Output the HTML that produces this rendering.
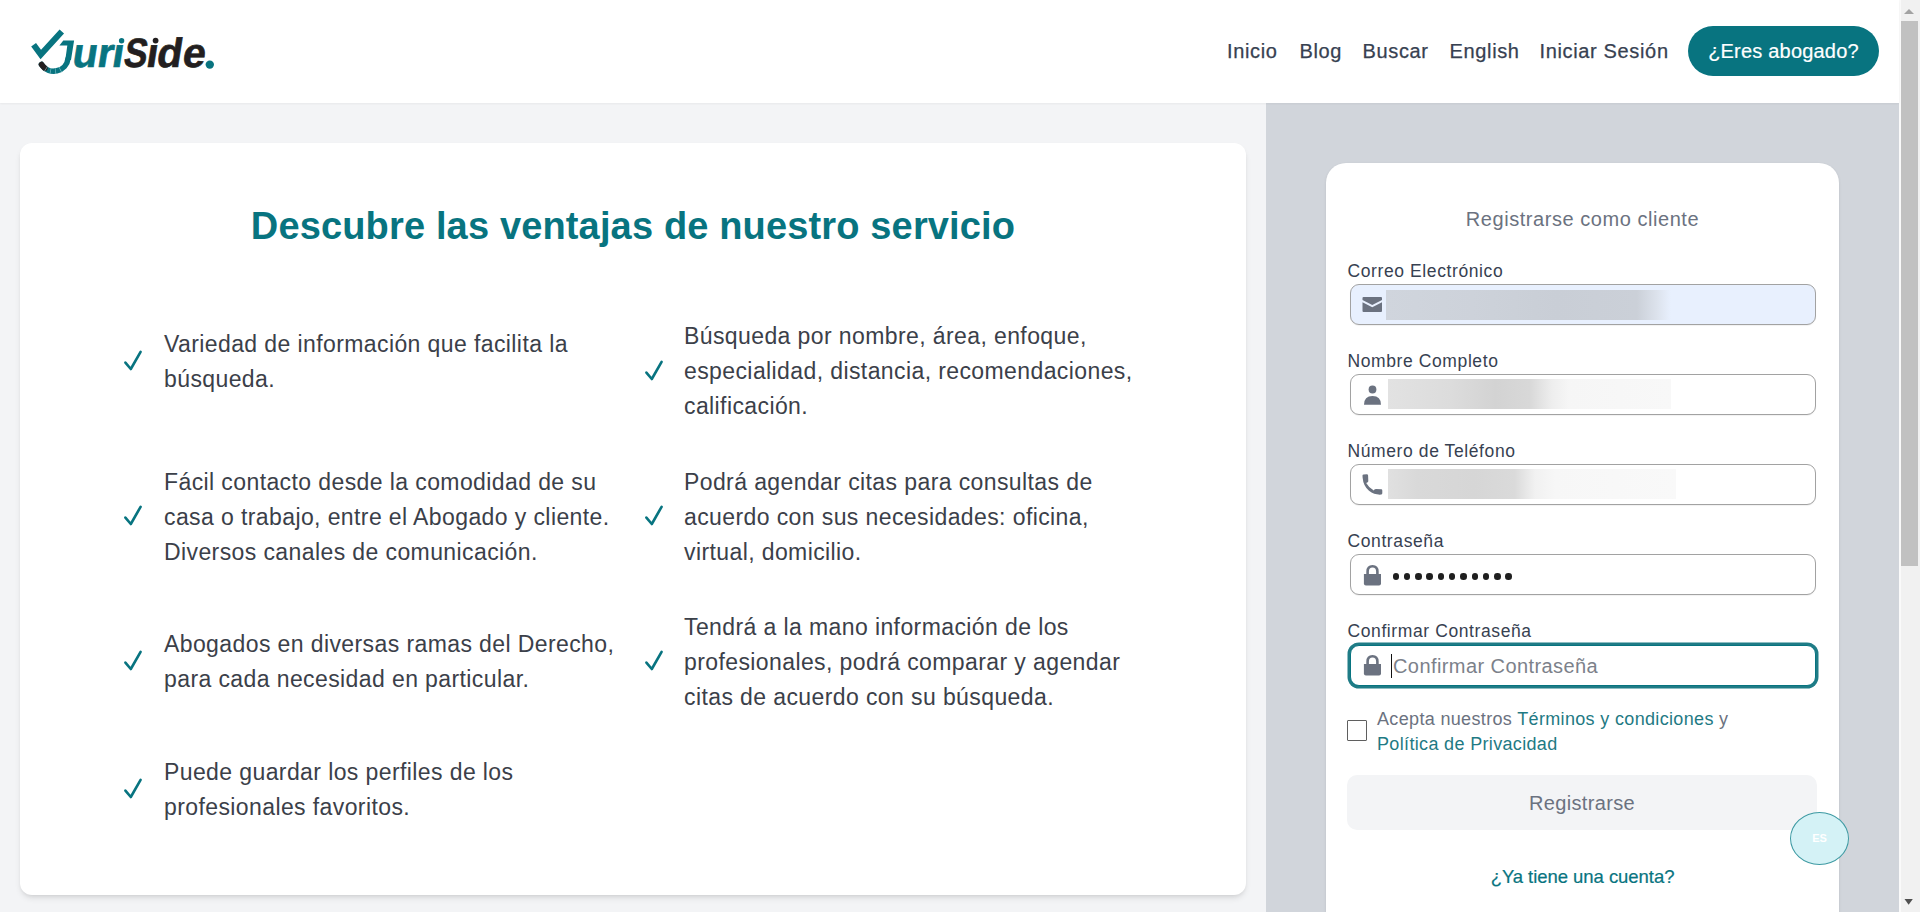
<!DOCTYPE html>
<html><head><meta charset="utf-8">
<style>
*{box-sizing:border-box;margin:0;padding:0}
html,body{width:1920px;height:912px;overflow:hidden;background:#f3f4f6;font-family:"Liberation Sans",sans-serif}
#header{position:absolute;left:0;top:0;width:1899px;height:103px;background:#fff;box-shadow:0 1px 2px rgba(0,0,0,.05);z-index:2}
.nav{position:absolute;top:38.8px;font-size:20px;color:#374151;white-space:nowrap;line-height:24px;-webkit-text-stroke:0.25px #374151;letter-spacing:0.65px}
#btn{position:absolute;left:1688px;top:26px;width:191px;height:50px;border-radius:25px;background:#087480}
#btntxt{position:absolute;left:1688px;top:39px;width:191px;text-align:center;color:#fff;font-size:20px;line-height:24px;white-space:nowrap;-webkit-text-stroke:0.2px #fff;letter-spacing:0.2px}
#card{position:absolute;left:20px;top:143px;width:1226px;height:752px;background:#fff;border-radius:12px;box-shadow:0 4px 6px -1px rgba(0,0,0,.1),0 2px 4px -2px rgba(0,0,0,.1)}
#h1{position:absolute;left:0;top:201px;width:1266px;text-align:center;font-size:38px;font-weight:bold;color:#087480;line-height:50px;white-space:nowrap;letter-spacing:0.15px}
.item{position:absolute;font-size:23px;line-height:35px;color:#3b4049;white-space:nowrap;letter-spacing:0.4px}
.chk{position:absolute}
#right{position:absolute;left:1266px;top:103px;width:633px;height:809px;background:#d1d5db}
#rcard{position:absolute;left:1326px;top:163px;width:513px;height:800px;background:#fff;border-radius:20px;box-shadow:0 1px 3px rgba(0,0,0,.1)}
#rtitle{position:absolute;left:1326px;width:513px;top:205px;text-align:center;font-size:20px;line-height:28px;color:#6b7280;white-space:nowrap;letter-spacing:0.55px}
.lbl{position:absolute;left:1347.5px;font-size:17.5px;color:#374151;line-height:20px;white-space:nowrap;letter-spacing:0.6px;margin-top:0.25px}
.inp{position:absolute;left:1350px;width:466px;height:41px;border:1.8px solid #a2a2a2;border-radius:9px;background:#fff;box-shadow:0 1px 1px rgba(0,0,0,.06)}
.ico{position:absolute}
.blur{position:absolute}
#sb{position:absolute;left:1899px;top:0;width:21px;height:912px;background:#f1f1f1;border-left:2px solid #fafafa}
#thumb{position:absolute;left:1901px;top:21px;width:17px;height:545px;background:#c1c1c1}
.dot{position:absolute;width:6.5px;height:6.5px;border-radius:50%;background:#1f1f1f;top:573px}
</style></head><body>
<div id="header">
  <svg style="position:absolute;left:0;top:0" width="230" height="100" viewBox="0 0 230 100">
    <path d="M33.6,44.8 L40.8,54.6 L61.8,31.5" fill="none" stroke="#087480" stroke-width="6" stroke-linejoin="miter" stroke-miterlimit="10"/>
    <path d="M59.4,45.6 L63.3,40.4 L74.1,40.4 L71,60 L65.3,60 L67.3,45.6 Z" fill="#087480"/>
    <path d="M41.5,64.5 A14.5,14.5 0 0 0 68.1,58.5" fill="none" stroke="#087480" stroke-width="5.6" stroke-linecap="round"/>
    <path d="M41.5,64.5 A14.5,14.5 0 0 0 68.1,58.5" fill="none" stroke="#231f20" stroke-width="5.6" stroke-linecap="round" stroke-dasharray="5 100"/>
    <path d="M41.5,64.5 A14.5,14.5 0 0 0 68.1,58.5" fill="none" stroke="#9fd6dc" stroke-width="5.8" stroke-dasharray="0 6 0.6 4.4 0.6 4.4 0.6 4.4 0.6 100" opacity="0.8"/>
    <text transform="translate(71.1,67.2) skewX(-9) scale(1.00,1)" x="0" y="0" font-family="Liberation Sans" font-weight="bold" font-size="41" fill="#087480" stroke="#087480" stroke-width="0.7">u</text><text transform="translate(96.0,67.2) skewX(-9) scale(1.00,1)" x="0" y="0" font-family="Liberation Sans" font-weight="bold" font-size="41" fill="#087480" stroke="#087480" stroke-width="0.7">r</text><text transform="translate(110.8,67.2) skewX(-9) scale(1.00,1)" x="0" y="0" font-family="Liberation Sans" font-weight="bold" font-size="41" fill="#087480" stroke="#087480" stroke-width="0.7">ı</text><circle cx="121.6" cy="40.8" r="2.7" fill="#087480"/><text transform="translate(122.4,67.2) skewX(-9) scale(0.85,1)" x="0" y="0" font-family="Liberation Sans" font-weight="bold" font-size="41" fill="#231f20" stroke="#231f20" stroke-width="0.7">S</text><text transform="translate(145.0,67.2) skewX(-9) scale(1.00,1)" x="0" y="0" font-family="Liberation Sans" font-weight="bold" font-size="41" fill="#231f20" stroke="#231f20" stroke-width="0.7">ı</text><circle cx="155.6" cy="40.6" r="2.9" fill="#231f20"/><text transform="translate(155.5,67.2) skewX(-9) scale(1.00,1)" x="0" y="0" font-family="Liberation Sans" font-weight="bold" font-size="41" fill="#231f20" stroke="#231f20" stroke-width="0.7">d</text><text transform="translate(181.3,67.2) skewX(-9) scale(1.00,1)" x="0" y="0" font-family="Liberation Sans" font-weight="bold" font-size="41" fill="#231f20" stroke="#231f20" stroke-width="0.7">e</text>
    <circle cx="209.8" cy="64.6" r="4.2" fill="#087480"/>
  </svg>
  <div class="nav" style="left:1227px">Inicio</div>
  <div class="nav" style="left:1299.5px">Blog</div>
  <div class="nav" style="left:1362.5px">Buscar</div>
  <div class="nav" style="left:1449.5px">English</div>
  <div class="nav" style="left:1539.5px">Iniciar Sesión</div>
  <div id="btn"></div>
  <div id="btntxt">¿Eres abogado?</div>
</div>
<div id="card"></div>
<div id="h1">Descubre las ventajas de nuestro servicio</div>
<div class="item" style="left:164px;top:326.5px">Variedad de información que facilita la<br>búsqueda.</div>
<svg class="chk" style="left:118.0px;top:345.0px" width="30" height="30" viewBox="0 0 30 30"><path d="M7.4,17.6 L12.8,24 L22.6,6.8" fill="none" stroke="#087480" stroke-width="2.6" stroke-linecap="round" stroke-linejoin="round"/></svg>
<div class="item" style="left:684px;top:319.2px">Búsqueda por nombre, área, enfoque,<br>especialidad, distancia, recomendaciones,<br>calificación.</div>
<svg class="chk" style="left:638.5px;top:355.0px" width="30" height="30" viewBox="0 0 30 30"><path d="M7.4,17.6 L12.8,24 L22.6,6.8" fill="none" stroke="#087480" stroke-width="2.6" stroke-linecap="round" stroke-linejoin="round"/></svg>
<div class="item" style="left:164px;top:465.1px">Fácil contacto desde la comodidad de su<br>casa o trabajo, entre el Abogado y cliente.<br>Diversos canales de comunicación.</div>
<svg class="chk" style="left:118.0px;top:500.0px" width="30" height="30" viewBox="0 0 30 30"><path d="M7.4,17.6 L12.8,24 L22.6,6.8" fill="none" stroke="#087480" stroke-width="2.6" stroke-linecap="round" stroke-linejoin="round"/></svg>
<div class="item" style="left:684px;top:465.1px">Podrá agendar citas para consultas de<br>acuerdo con sus necesidades: oficina,<br>virtual, domicilio.</div>
<svg class="chk" style="left:638.5px;top:500.0px" width="30" height="30" viewBox="0 0 30 30"><path d="M7.4,17.6 L12.8,24 L22.6,6.8" fill="none" stroke="#087480" stroke-width="2.6" stroke-linecap="round" stroke-linejoin="round"/></svg>
<div class="item" style="left:164px;top:627.4px">Abogados en diversas ramas del Derecho,<br>para cada necesidad en particular.</div>
<svg class="chk" style="left:118.0px;top:645.0px" width="30" height="30" viewBox="0 0 30 30"><path d="M7.4,17.6 L12.8,24 L22.6,6.8" fill="none" stroke="#087480" stroke-width="2.6" stroke-linecap="round" stroke-linejoin="round"/></svg>
<div class="item" style="left:684px;top:610.3px">Tendrá a la mano información de los<br>profesionales, podrá comparar y agendar<br>citas de acuerdo con su búsqueda.</div>
<svg class="chk" style="left:638.5px;top:645.0px" width="30" height="30" viewBox="0 0 30 30"><path d="M7.4,17.6 L12.8,24 L22.6,6.8" fill="none" stroke="#087480" stroke-width="2.6" stroke-linecap="round" stroke-linejoin="round"/></svg>
<div class="item" style="left:164px;top:755.3px">Puede guardar los perfiles de los<br>profesionales favoritos.</div>
<svg class="chk" style="left:118.0px;top:772.6px" width="30" height="30" viewBox="0 0 30 30"><path d="M7.4,17.6 L12.8,24 L22.6,6.8" fill="none" stroke="#087480" stroke-width="2.6" stroke-linecap="round" stroke-linejoin="round"/></svg>
<div id="right"></div>
<div id="rcard"></div>
<div id="rtitle">Registrarse como cliente</div>

<div class="lbl" style="top:260.45px">Correo Electrónico</div>
<div class="inp" style="top:284px;background:#e8f0fe"></div>
<div class="blur" style="left:1386px;top:290px;width:285px;height:30px;background:linear-gradient(90deg,#d0d5dd 0%,#cdd2da 30%,#c9ced6 60%,#cbd0d8 88%,#dce2ec 95%,#e8f0fe 100%)"></div>
<svg class="ico" style="left:1362px;top:296px" width="21" height="17" viewBox="0 0 21 17"><path d="M0.5,2 Q0.5,1 1.5,1 L19,1 Q20,1 20,2 L20,4 L10.25,9 L0.5,4 Z" fill="#6b7280"/><path d="M0.5,6.3 L10.25,11.3 L20,6.3 L20,15 Q20,16 19,16 L1.5,16 Q0.5,16 0.5,15 Z" fill="#6b7280"/></svg>

<div class="lbl" style="top:350.45px">Nombre Completo</div>
<div class="inp" style="top:374px"></div>
<div class="blur" style="left:1388px;top:379px;width:283px;height:30px;background:linear-gradient(90deg,#e2e2e2 0%,#dcdcdc 22%,#d3d3d3 38%,#d8d8d8 50%,#eeeeee 58%,#f6f6f6 64%,#f8f8f8 100%)"></div>
<svg class="ico" style="left:1362px;top:384px" width="21" height="22" viewBox="0 0 21 22"><circle cx="10.5" cy="5.5" r="3.9" fill="#6b7280"/><path d="M2,20.8 Q2,12 10.5,12 Q19,12 19,20.8 Z" fill="#6b7280"/></svg>

<div class="lbl" style="top:440.45px">Número de Teléfono</div>
<div class="inp" style="top:464px"></div>
<div class="blur" style="left:1388px;top:469px;width:288px;height:30px;background:linear-gradient(90deg,#e0e0e0 0%,#d9d9d9 10%,#d6d6d6 30%,#dadada 44%,#f1f1f1 51%,#f7f7f7 58%,#f9f9f9 100%)"></div>
<svg class="ico" style="left:1360px;top:472px" width="25" height="25" viewBox="0 0 25 25"><path d="M3.6,2.4 L6.8,2.3 Q8,2.3 8.1,3.5 L8.3,9 Q8.3,10.2 7.2,10.6 L6.2,11 Q8.6,15.6 13.8,18.4 L14.4,17.6 Q14.9,17 16,17 L21.2,17.2 Q22.3,17.3 22.3,18.4 L22.3,21.3 Q22.3,22.5 21,22.6 Q14.5,23 9,18.8 Q3.3,14 2.6,5.5 L2.5,3.6 Q2.5,2.5 3.6,2.4 Z" fill="#6b7280"/></svg>

<div class="lbl" style="top:530.45px">Contraseña</div>
<div class="inp" style="top:554px"></div>
<svg class="ico" style="left:1362px;top:563px" width="21" height="24" viewBox="0 0 21 24"><path d="M5.6,11.5 L5.6,8.6 Q5.6,3.3 10.5,3.3 Q15.4,3.3 15.4,8.6 L15.4,11.5" fill="none" stroke="#6b7280" stroke-width="2.6"/><path d="M1.9,11 L19,11 L19,20.6 Q19,22.6 17,22.6 L3.9,22.6 Q1.9,22.6 1.9,20.6 Z" fill="#6b7280"/></svg>
<div class="dot" style="left:1392.55px"></div><div class="dot" style="left:1403.83px"></div><div class="dot" style="left:1415.11px"></div><div class="dot" style="left:1426.39px"></div><div class="dot" style="left:1437.67px"></div><div class="dot" style="left:1448.95px"></div><div class="dot" style="left:1460.23px"></div><div class="dot" style="left:1471.51px"></div><div class="dot" style="left:1482.79px"></div><div class="dot" style="left:1494.07px"></div><div class="dot" style="left:1505.35px"></div>

<div class="lbl" style="top:620.45px">Confirmar Contraseña</div>
<div class="inp" style="top:645px;height:41px;border:1px solid #087480;box-shadow:0 0 0 2.5px #1f7c86"></div>
<svg class="ico" style="left:1362px;top:653px" width="21" height="24" viewBox="0 0 21 24"><path d="M5.6,11.5 L5.6,8.6 Q5.6,3.3 10.5,3.3 Q15.4,3.3 15.4,8.6 L15.4,11.5" fill="none" stroke="#6b7280" stroke-width="2.6"/><path d="M1.9,11 L19,11 L19,20.6 Q19,22.6 17,22.6 L3.9,22.6 Q1.9,22.6 1.9,20.6 Z" fill="#6b7280"/></svg>
<div style="position:absolute;left:1391px;top:653.5px;width:1px;height:24px;background:#111"></div>
<div style="position:absolute;left:1393px;top:652px;font-size:20px;line-height:28px;color:#7c818a;white-space:nowrap;letter-spacing:0.42px">Confirmar Contraseña</div>

<div style="position:absolute;left:1347px;top:720px;width:20px;height:20.5px;border:1.2px solid #5f5f5f;border-radius:1px;background:#fff"></div>
<div style="position:absolute;left:1377px;top:706.9px;font-size:18px;line-height:25px;color:#6b7280;white-space:nowrap;letter-spacing:0.34px">Acepta nuestros <span style="color:#1f7a84">Términos y condiciones</span> y<br><span style="color:#1f7a84">Política de Privacidad</span></div>

<div style="position:absolute;left:1347px;top:775px;width:470px;height:55px;border-radius:10px;background:#f3f4f6"></div>
<div style="position:absolute;left:1347px;top:788.7px;width:470px;text-align:center;font-size:20px;line-height:28px;color:#6b7280;white-space:nowrap;letter-spacing:0.36px">Registrarse</div>

<div style="position:absolute;left:1326px;top:865px;width:513px;text-align:center;font-size:18.5px;line-height:24px;color:#087480;white-space:nowrap;-webkit-text-stroke:0.2px #087480;letter-spacing:-0.05px">¿Ya tiene una cuenta?</div>

<div style="position:absolute;left:1790px;top:811.5px;width:59px;height:53px;border-radius:50%;background:#d4f2f6;border:1.5px solid #3e9aa3"></div>
<div style="position:absolute;left:1790px;top:830px;width:59px;text-align:center;font-size:11px;line-height:16px;color:#fff;font-weight:bold">ES</div>

<div id="sb"></div>
<div id="thumb"></div>
<svg style="position:absolute;left:1899px;top:0" width="21" height="912" viewBox="0 0 21 912"><path d="M5,14 L15,14 L10,9 Z" fill="#a3a3a3"/><path d="M5.5,899 L13.8,899 L9.65,904.8 Z" fill="#505050"/></svg>
</body></html>
